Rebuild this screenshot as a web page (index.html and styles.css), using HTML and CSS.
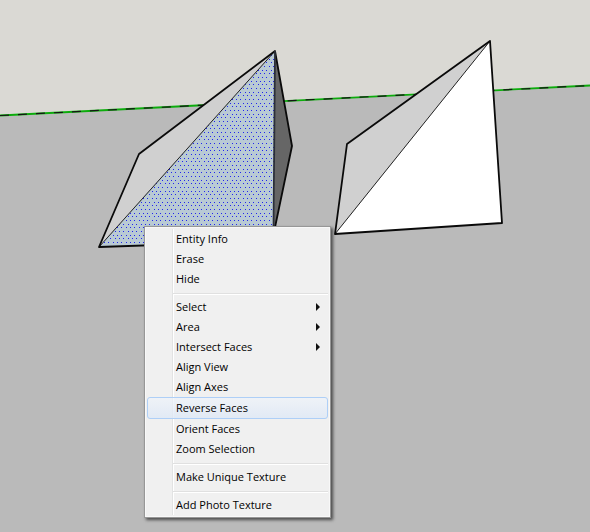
FILE: index.html
```html
<!DOCTYPE html>
<html lang="en">
<head>
<meta charset="utf-8">
<title>Reverse Faces</title>
<link rel="stylesheet" href="styles.css">
</head>
<body>
<main class="scene">
  <svg class="model" viewBox="0 0 590 532" preserveAspectRatio="xMinYMin slice" role="img" aria-label="Two pyramids on the ground plane">
    <defs>
      <pattern id="dots" width="13" height="22" patternUnits="userSpaceOnUse">
        <rect width="13" height="22" fill="#b9cad4"/>
        <path shape-rendering="crispEdges" fill="#2226ee" d="M0 0h1v1h-1zM4 0h1v1h-1zM9 0h1v1h-1zM2 4h1v1h-1zM6 4h1v1h-1zM11 4h1v1h-1zM0 7h1v1h-1zM4 7h1v1h-1zM9 7h1v1h-1zM2 11h1v1h-1zM6 11h1v1h-1zM11 11h1v1h-1zM0 15h1v1h-1zM4 15h1v1h-1zM9 15h1v1h-1zM2 18h1v1h-1zM6 18h1v1h-1zM11 18h1v1h-1z"/>
      </pattern>
    </defs>
    <rect class="sky" width="590" height="532"/>
    <path class="ground" d="M0 115.500 590 85.500V532H0Z"/>
    <path class="axis" d="M0 115.500 590 85.500"/>
    <path class="axis-dash" d="M0 115.500 590 85.500"/>

    <path class="side" d="M275 51 139 154 99 247Z"/>
    <path class="selected" d="M275 51 99 247 273 241Z"/>
    <path class="dark" d="M275 51 292 146 274 232Z"/>
    <path class="crease" d="M275 51 99 247"/>
    <path class="edge" d="M273 241 99 247 139 154 275 51 292 146 274 232"/>
    <path class="inner-edge" d="M275 51 273.500 232"/>

    <path class="side" d="M490 41 347 144 335 234Z"/>
    <path class="front" d="M490 41 335 234 502 223Z"/>
    <path class="crease" d="M490 41 335 234"/>
    <path class="edge" d="M490 41 347 144 335 234 502 223Z"/>
  </svg>

  <menu class="context-menu">
    <li><button class="item">Entity Info</button></li>
    <li><button class="item">Erase</button></li>
    <li><button class="item">Hide</button></li>
    <li class="separator"></li>
    <li><button class="item submenu">Select</button></li>
    <li><button class="item submenu">Area</button></li>
    <li><button class="item submenu">Intersect Faces</button></li>
    <li><button class="item">Align View</button></li>
    <li><button class="item">Align Axes</button></li>
    <li><button class="item active">Reverse Faces</button></li>
    <li><button class="item">Orient Faces</button></li>
    <li><button class="item">Zoom Selection</button></li>
    <li class="separator"></li>
    <li><button class="item">Make Unique Texture</button></li>
    <li class="separator"></li>
    <li><button class="item">Add Photo Texture</button></li>
  </menu>
</main>
</body>
</html>
```
FILE: styles.css
```css
* {
  box-sizing: border-box;
}

body {
  margin: 0;
  background: #bababa;
  font-family: "Open Sans", "Noto Sans", sans-serif;
}

.scene {
  position: relative;
  min-height: 100vh;
  overflow: hidden;
}

.model {
  display: block;
  width: 100%;
  height: 100vh;
}

.sky { fill: #dad9d4; }
.ground { fill: #bababa; }

.axis,
.axis-dash {
  fill: none;
  stroke: #0cac0c;
  stroke-width: 1.8;
}

.axis-dash {
  stroke: #151515;
  stroke-width: 1.2;
  stroke-dasharray: 9 9;
}

.side { fill: #d0d0d0; }
.selected { fill: url(#dots); }
.dark { fill: #666; }
.front { fill: #fff; }

.edge,
.inner-edge,
.crease {
  fill: none;
  stroke: #0a0a0a;
  stroke-width: 1.8;
  stroke-linejoin: round;
}

.inner-edge {
  stroke: #2b2f38;
}

.crease {
  stroke: #222;
  stroke-width: 1;
}

.context-menu {
  position: absolute;
  left: 144px;
  top: 226px;
  width: 187px;
  margin: 0;
  padding: 2px;
  list-style: none;
  border: 1px solid #979797;
  background: linear-gradient(90deg, #e2e3e3 1px, #fff 1px) 27px 2px / 2px calc(100% - 4px) no-repeat #f0f0f0;
  box-shadow: inset 0 0 0 1px #f8f8f8, 2px 2px 3px rgb(0 0 0 / 60%);
}

.item {
  display: flex;
  align-items: center;
  justify-content: space-between;
  width: 100%;
  height: 20px;
  padding: 0 8px 0 29px;
  border: 0;
  background: none;
  color: #000;
  font: 11px/20px "Open Sans", "Noto Sans", sans-serif;
  text-align: left;
}

.submenu::after {
  content: "";
  border: solid transparent;
  border-width: 4px 0 4px 4px;
  border-left-color: #111;
}

.active {
  height: 22px;
  padding: 0 7px 0 28px;
  border: 1px solid #aecff7;
  border-radius: 3px;
  background: linear-gradient(rgb(238 243 250 / 70%), rgb(222 232 246 / 80%));
}

.separator {
  height: 8px;
  margin-left: 26px;
  background: linear-gradient(#e0e0e0 1px, #fff 1px) 0 4px / 100% 2px no-repeat;
}
```
